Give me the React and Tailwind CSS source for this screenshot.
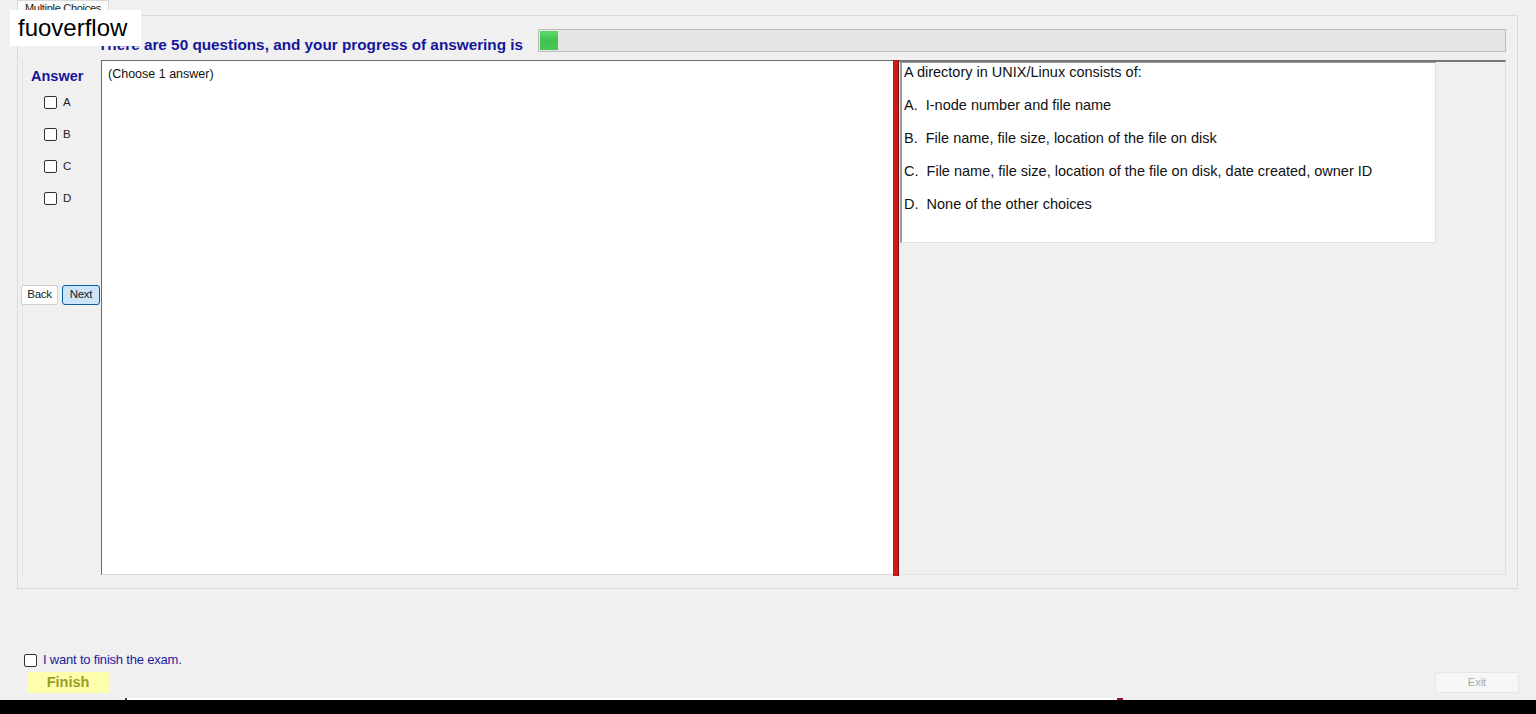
import React from 'react';

const options = [
  'A.  I-node number and file name',
  'B.  File name, file size, location of the file on disk',
  'C.  File name, file size, location of the file on disk, date created, owner ID',
  'D.  None of the other choices',
];

function Box({ className = '' }) {
  return <span className={'inline-block w-[13px] h-[13px] border border-[#333] rounded-[2px] bg-white ' + className} />;
}

export default function App() {
  return (
    <div className="relative w-[1536px] h-[714px] overflow-hidden bg-[#f0f0f0] font-['Liberation_Sans',Arial,sans-serif] flex flex-col">
      {/* tab strip */}
      <div className="h-[15px] pl-[17px] flex items-end">
        <div className="h-[15px] px-[7px] bg-[#fbfbfb] border border-b-0 border-[#d9d9d9] text-[11px] leading-[14px] tracking-[-0.3px] text-[#222]">Multiple Choices</div>
      </div>

      {/* tab page */}
      <div className="ml-[17px] w-[1501px] h-[574px] border border-[#dadada] bg-[#f0f0f0] flex flex-col">
        <div className="mt-[13px] h-[23px] flex items-center">
          <div className="pl-[80px] pt-[8px] w-[520px] text-[15.3px] leading-[15px] font-bold text-[#16169c] whitespace-nowrap">There are 50 questions, and your progress of answering is</div>
          <div className="w-[968px] h-[23px] border border-[#bcbcbc] bg-[#e6e6e6] p-[1px]">
            <div className="w-[18px] h-full bg-gradient-to-b from-[#5fd86b] via-[#3fc24e] to-[#49c856]" />
          </div>
        </div>

        <div className="mt-[8px] h-[515px] flex">
          {/* answer column */}
          <div className="w-[79px] ml-[4px] border-l border-[#e2e2e2] flex flex-col">
            <div className="pt-[8px] pl-[8px] text-[14.5px] leading-[17px] font-bold text-[#16169c]">Answer</div>
            <div className="mt-[11px] flex flex-col gap-[19px] pl-[21px]">
              {['A', 'B', 'C', 'D'].map((l) => (
                <div key={l} className="flex items-center gap-[6px] h-[13px]">
                  <Box />
                  <span className="text-[11.5px] text-[#222]">{l}</span>
                </div>
              ))}
            </div>
            <div className="mt-[80px] -ml-[2px] flex gap-[4px]">
              <button className="w-[37px] h-[20px] bg-white border border-[#d0d0d0] rounded-[2px] text-[11.5px] text-[#222] tracking-[-0.3px]">Back</button>
              <button className="w-[38px] h-[20px] bg-[#cce4f7] border border-[#0a5a9c] rounded-[3px] text-[11.5px] text-[#222] tracking-[-0.3px]">Next</button>
            </div>
          </div>

          {/* main white area */}
          <div className="w-[792px] h-[515px] bg-white border-l border-t border-[#6a6a6a] border-b border-b-[#d8d8d8] pl-[6px] pt-[4px]">
            <div className="text-[12.5px] text-[#111]">(Choose 1 answer)</div>
          </div>

          {/* splitter */}
          <div className="w-[6px] h-[516px] bg-[#d01818] border-r border-[#7a1010]" />

          {/* question panel */}
          <div className="w-[607px] h-[515px] border-t-2 border-[#777] border-r border-r-[#dcdcdc] border-b border-b-[#e2e2e2]">
            <div className="ml-[1px] w-[536px] h-[181px] bg-white border-l-2 border-t border-[#9a9a9a] border-r border-r-[#e0e0e0] border-b border-b-[#e0e0e0] pl-[2px] text-[14.5px] text-[#111]">
              <div className="h-[19px] leading-[19px]">A directory in UNIX/Linux consists of:</div>
              {options.map((o) => (
                <div key={o} className="mt-[14px] h-[19px] leading-[19px] whitespace-pre">{o}</div>
              ))}
            </div>
          </div>
        </div>
        <div className="mt-[13px] ml-[4px] w-[1484px] border-t border-[#dcdcdc]" />
      </div>

      {/* finish area */}
      <div className="mt-[64px] pl-[24px] flex items-center gap-[6px] h-[14px]">
        <Box />
        <span className="text-[13px] text-[#1c1c9c] tracking-[-0.2px]">I want to finish the exam.</span>
      </div>
      <div className="mt-[5px] h-[21px] flex justify-between pr-[17px]">
        <button className="ml-[27px] w-[82px] h-[21px] bg-[#fdfdae] text-[14.5px] font-bold text-[#9c9c1e]">Finish</button>
        <button className="w-[84px] h-[21px] bg-[#f6f6f6] border border-[#e6e6e6] rounded-[2px] text-[11px] text-[#a8a8a8]">Exit</button>
      </div>

      <div className="mt-[5px] h-[2px] flex">
        <div className="ml-[125px] w-[2px] h-[2px] bg-[#444]" />
        <div className="w-[990px] h-[2px] bg-white" />
        <div className="w-[6px] h-[2px] bg-[#9c1030]" />
      </div>
      <div className="flex-1 bg-black" />

      {/* watermark overlay */}
      <div className="absolute left-[10px] top-[10px] w-[131px] h-[36px] bg-white flex items-center pl-[8px] text-[24px] text-black">fuoverflow</div>
    </div>
  );
}
